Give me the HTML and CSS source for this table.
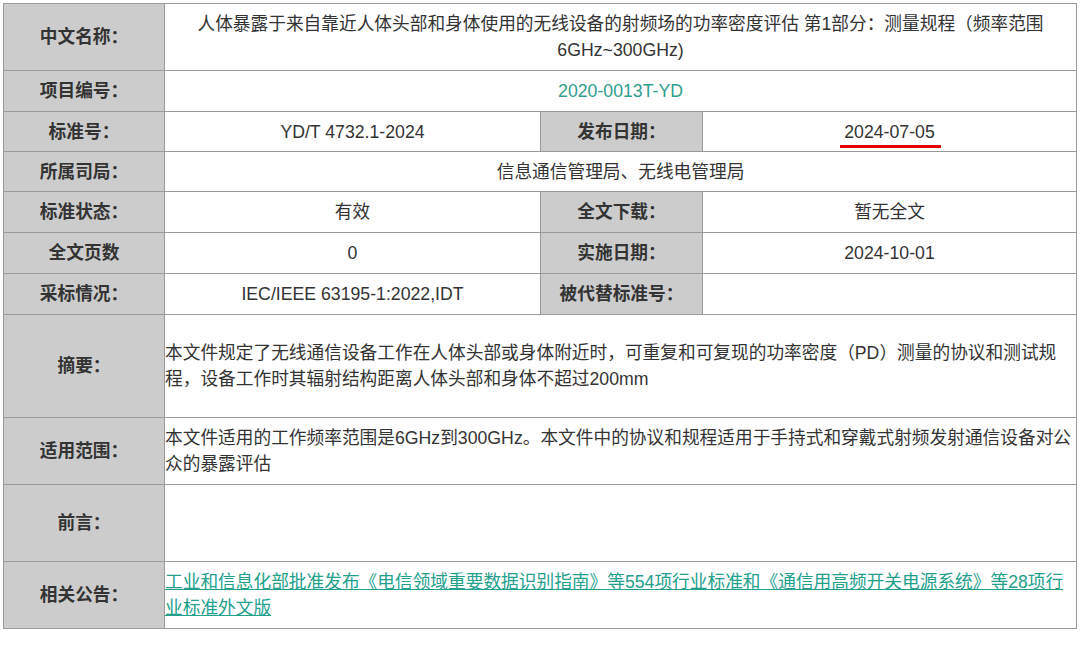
FILE: index.html
```html
<!DOCTYPE html>
<html lang="zh-CN">
<head>
<meta charset="utf-8">
<title>标准详情</title>
<link rel="stylesheet" href="styles.css">
</head>
<body>
<table class="info">
  <colgroup>
    <col class="c-label">
    <col class="c-value">
    <col class="c-label2">
    <col class="c-value2">
  </colgroup>
  <tbody>
    <tr class="r-67">
      <th>中文名称：</th>
      <td colspan="3" class="center">人体暴露于来自靠近人体头部和身体使用的无线设备的射频场的功率密度评估 第1部分：测量规程（频率范围 6GHz~300GHz)</td>
    </tr>
    <tr class="r-41">
      <th>项目编号：</th>
      <td colspan="3" class="center teal">2020-0013T-YD</td>
    </tr>
    <tr class="r-40">
      <th>标准号：</th>
      <td class="center">YD/T 4732.1-2024</td>
      <th>发布日期：</th>
      <td class="center"><span class="marked">2024-07-05</span></td>
    </tr>
    <tr class="r-40">
      <th>所属司局：</th>
      <td colspan="3" class="center">信息通信管理局、无线电管理局</td>
    </tr>
    <tr class="r-41">
      <th>标准状态：</th>
      <td class="center">有效</td>
      <th>全文下载：</th>
      <td class="center">暂无全文</td>
    </tr>
    <tr class="r-41">
      <th>全文页数</th>
      <td class="center">0</td>
      <th>实施日期：</th>
      <td class="center">2024-10-01</td>
    </tr>
    <tr class="r-41">
      <th>采标情况：</th>
      <td class="center">IEC/IEEE 63195-1:2022,IDT</td>
      <th>被代替标准号：</th>
      <td class="center"></td>
    </tr>
    <tr class="r-103">
      <th>摘要：</th>
      <td colspan="3">本文件规定了无线通信设备工作在人体头部或身体附近时，可重复和可复现的功率密度（PD）测量的协议和测试规程，设备工作时其辐射结构距离人体头部和身体不超过200mm</td>
    </tr>
    <tr class="r-67">
      <th>适用范围：</th>
      <td colspan="3">本文件适用的工作频率范围是6GHz到300GHz。本文件中的协议和规程适用于手持式和穿戴式射频发射通信设备对公众的暴露评估</td>
    </tr>
    <tr class="r-77">
      <th>前言：</th>
      <td colspan="3"></td>
    </tr>
    <tr class="r-67">
      <th>相关公告：</th>
      <td colspan="3"><a class="link" href="#">工业和信息化部批准发布《电信领域重要数据识别指南》等554项行业标准和《通信用高频开关电源系统》等28项行业标准外文版</a></td>
    </tr>
  </tbody>
</table>
</body>
</html>
```
FILE: styles.css
```css
html, body {
  margin: 0;
  padding: 0;
  background: #ffffff;
}

body {
  padding: 3px 4px 0 3px;
  font-family: "Liberation Sans", "Noto Sans CJK SC", sans-serif;
  font-size: 17.7px;
  color: #333333;
}

.info {
  width: 1073px;
  border-collapse: collapse;
  table-layout: fixed;
  border: 1px solid #9a9a9a;
}

.c-label { width: 161px; }
.c-value { width: 376px; }
.c-label2 { width: 162px; }
.c-value2 { width: 374px; }

.info th,
.info td {
  border: 1px solid #9a9a9a;
  padding: 0;
  vertical-align: middle;
  line-height: 26px;
}

.info th {
  background: #cccccc;
  font-weight: bold;
  text-align: center;
  color: #333333;
}

.info td {
  background: #ffffff;
  text-align: left;
  font-weight: normal;
}

.info td.center {
  text-align: center;
}

.r-40 { height: 40px; }
.r-41 { height: 41px; }
.r-67 { height: 67px; }
.r-77 { height: 77px; }
.r-103 { height: 103px; }

.teal {
  color: #2e9e8f;
}

.link {
  color: #22a08c;
  text-decoration: underline;
}

.marked {
  position: relative;
}

.marked::after {
  content: "";
  position: absolute;
  left: -4px;
  right: -6px;
  bottom: -6px;
  height: 3px;
  background: #e30000;
}
```
